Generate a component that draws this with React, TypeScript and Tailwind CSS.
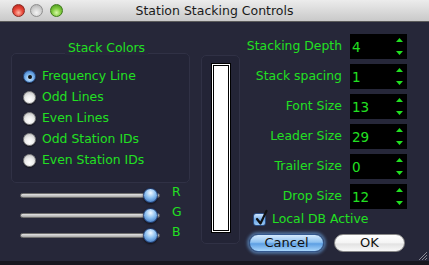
import React from "react";

const GREEN = "text-[#22e022]";

function Radio({ checked }: { checked?: boolean }) {
  return checked ? (
    <div className="w-[13px] h-[13px] rounded-full border border-[#2b4f86] bg-[radial-gradient(circle_at_50%_65%,#d8ecff_0%,#79b3ec_45%,#3169b8_100%)] flex items-center justify-center shadow-[0_1px_1px_rgba(0,0,0,0.5)]">
      <div className="w-[4px] h-[4px] rounded-full bg-[#111]" />
    </div>
  ) : (
    <div className="w-[13px] h-[13px] rounded-full border border-[#8a8a8a] bg-[radial-gradient(circle_at_50%_70%,#ffffff_0%,#ececec_45%,#b8b8b8_100%)] shadow-[0_1px_1px_rgba(0,0,0,0.5)]" />
  );
}

function RadioRow({ label, checked }: { label: string; checked?: boolean }) {
  return (
    <div className="h-[21px] flex items-center">
      <Radio checked={checked} />
      <span className={`ml-[6px] text-[12.4px] leading-none ${GREEN}`}>{label}</span>
    </div>
  );
}

function SliderRow({ label }: { label: string }) {
  return (
    <div className="h-[20px] flex items-center">
      <div className="relative ml-[9px] w-[140px] h-[5px] rounded-full border border-[#6e6e6e] bg-[linear-gradient(to_bottom,#e4e4e4,#a8a8a8)]">
        <div className="absolute left-[122px] top-[-6px] w-[15px] h-[15px] rounded-full border border-[#1f3d73] bg-[radial-gradient(circle_at_50%_30%,#f0f8ff_0%,#8cc0f0_45%,#2f66b4_100%)] shadow-[0_1px_2px_rgba(0,0,0,0.6)]" />
      </div>
      <span className={`ml-[12px] -mt-[5px] text-[12.4px] leading-none ${GREEN}`}>{label}</span>
    </div>
  );
}

function Spinner({ label, value }: { label: string; value: string }) {
  return (
    <div className="h-[25px] flex items-center justify-end">
      <span className={`text-[12.4px] leading-none ${GREEN}`}>{label}</span>
      <div className="ml-[8px] w-[57px] h-[25px] bg-black flex items-center relative">
        <span className={`ml-[2px] mt-[2px] text-[13.5px] leading-none ${GREEN}`}>{value}</span>
        <svg className="absolute left-[46px] top-[4px]" width="7" height="4" viewBox="0 0 7 4">
          <polygon points="3.5,0 7,4 0,4" fill="#22e022" />
        </svg>
        <svg className="absolute left-[46px] top-[17px]" width="7" height="4" viewBox="0 0 7 4">
          <polygon points="0,0 7,0 3.5,4" fill="#22e022" />
        </svg>
      </div>
    </div>
  );
}

export default function App() {
  return (
    <div className="w-[429px] h-[265px] bg-[#17171f] font-['DejaVu_Sans',sans-serif] overflow-hidden relative">
      {/* Title bar */}
      <div className="h-[22px] bg-[linear-gradient(to_bottom,#ececec,#c9c9c9)] border-b border-[#5a5a5a] flex items-center relative">
        <div className="ml-[12px] w-[13px] h-[13px] rounded-full border border-[#8a2a22] bg-[radial-gradient(circle_at_50%_70%,#ffb8a8_0%,#e8483a_45%,#b01a12_100%)]" />
        <div className="ml-[5px] w-[13px] h-[13px] rounded-full border border-[#8e8e8e] bg-[radial-gradient(circle_at_50%_70%,#f4f4f4_0%,#d0d0d0_50%,#a8a8a8_100%)]" />
        <div className="ml-[7px] w-[13px] h-[13px] rounded-full border border-[#3f7a1c] bg-[radial-gradient(circle_at_50%_70%,#d8f8a8_0%,#82cc40_45%,#3f8c16_100%)]" />
        <div className="absolute inset-0 flex items-center justify-center text-[12.5px] text-[#1a1a1a] pt-[1px]">
          Station Stacking Controls
        </div>
      </div>

      {/* Body */}
      <div className="h-[239px] bg-[#262739] flex">
        {/* Left column */}
        <div className="pl-[11px] w-[190px] flex flex-col">
          <div className="relative mt-[31px] w-[179px] h-[130px] rounded-[5px] border border-[#303145] bg-[#232436]">
            <div className={`absolute left-[53px] top-[-13px] px-[3px] bg-[#262739] text-[12.4px] leading-[14px] ${GREEN}`}>
              Stack Colors
            </div>
            <div className="pt-[12px] pl-[11px] flex flex-col">
              <RadioRow label="Frequency Line" checked />
              <RadioRow label="Odd Lines" />
              <RadioRow label="Even Lines" />
              <RadioRow label="Odd Station IDs" />
              <RadioRow label="Even Station IDs" />
            </div>
          </div>
          <div className="mt-[2px] flex flex-col">
            <SliderRow label="R" />
            <SliderRow label="G" />
            <SliderRow label="B" />
          </div>
        </div>

        {/* Middle box */}
        <div className="ml-[11px] mt-[33px] w-[39px] h-[189px] rounded-[5px] border border-[#303145] bg-[#232436] flex justify-center pt-[7px]">
          <div className="w-[20px] h-[170px] border border-black bg-white p-[1px]">
            <div className="w-full h-full border border-black bg-white" />
          </div>
        </div>

        {/* Right column */}
        <div className="ml-[5px] w-[162px] mt-[12px] flex flex-col">
          <div className="flex flex-col gap-[5px]">
            <Spinner label="Stacking Depth" value="4" />
            <Spinner label="Stack spacing" value="1" />
            <Spinner label="Font Size" value="13" />
            <Spinner label="Leader Size" value="29" />
            <Spinner label="Trailer Size" value="0" />
            <Spinner label="Drop Size" value="12" />
          </div>
          <div className="mt-[3px] h-[14px] flex items-center">
            <div className="relative ml-[8px] w-[13px] h-[13px] rounded-[3px] border border-[#2b4f86] bg-[linear-gradient(to_bottom,#cfe6ff,#6aa6e6_55%,#9ccaf6)]">
              <svg className="absolute left-[1px] top-[-4px] overflow-visible" width="13" height="16" viewBox="0 0 13 16">
                <path d="M2 9 L5.5 13.5 L11.5 1" fill="none" stroke="#111" strokeWidth="2.2" strokeLinecap="round" strokeLinejoin="round" />
              </svg>
            </div>
            <span className={`ml-[6px] text-[12.4px] leading-none ${GREEN}`}>Local DB Active</span>
          </div>
          <div className="mt-[8px] flex items-center">
            <div className="ml-[4px] w-[75px] h-[18px] rounded-full border border-[#34598f] bg-[linear-gradient(to_bottom,#d4eafd_0%,#8fc2f1_45%,#5d9fe3_55%,#a9d6fb_100%)] shadow-[0_0_3px_2px_rgba(110,170,235,0.55)] flex items-center justify-center text-[13px] text-[#111]">
              Cancel
            </div>
            <div className="ml-[10px] w-[71px] h-[18px] rounded-full border border-[#8a8a8a] bg-[linear-gradient(to_bottom,#ffffff_0%,#f4f4f4_50%,#e2e2e2_55%,#f8f8f8_100%)] flex items-center justify-center text-[13px] text-[#111]">
              OK
            </div>
          </div>
        </div>
      </div>

      {/* Resize grip */}
      <svg className="absolute left-[418px] top-[251px]" width="10" height="10" viewBox="0 0 10 10">
        <line x1="1" y1="9" x2="9" y2="1" stroke="#8a8a95" strokeWidth="1" />
        <line x1="4" y1="9" x2="9" y2="4" stroke="#8a8a95" strokeWidth="1" />
        <line x1="7" y1="9" x2="9" y2="7" stroke="#8a8a95" strokeWidth="1" />
      </svg>
    </div>
  );
}
